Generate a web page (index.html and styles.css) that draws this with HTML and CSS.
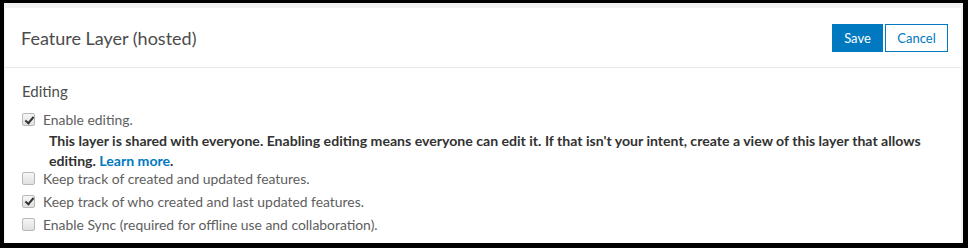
FILE: index.html
```html
<!DOCTYPE html>
<html>
<head>
<meta charset="utf-8">
<link rel="stylesheet" href="styles.css">
</head>
<body>
<div class="frame">
  <div class="panel">
    <div class="header">
      <h1 class="title">Feature Layer (hosted)</h1>
      <div class="actions">
        <button class="btn btn-primary">Save</button>
        <button class="btn btn-clear">Cancel</button>
      </div>
    </div>
    <div class="body">
      <div class="section-title">Editing</div>
      <label class="row"><span class="cb checked"></span><span>Enable editing.</span></label>
      <p class="warning">This layer is shared with everyone. Enabling editing means everyone can edit it. If that isn't your intent, create a view of this layer that allows editing. <a href="#">Learn more</a>.</p>
      <label class="row"><span class="cb"></span><span>Keep track of created and updated features.</span></label>
      <label class="row"><span class="cb checked"></span><span>Keep track of who created and last updated features.</span></label>
      <label class="row"><span class="cb"></span><span>Enable Sync (required for offline use and collaboration).</span></label>
    </div>
  </div>
</div>
</body>
</html>
```

FILE: styles.css
```css
html, body {
  margin: 0;
  padding: 0;
  background: #000;
}
.frame {
  width: 968px;
  height: 248px;
  box-sizing: border-box;
  border-style: solid;
  border-color: #000;
  border-width: 3px 5px 5px 4px;
  background: #f2f2f2;
  padding: 5px 2px 0 1px;
  overflow: hidden;
}
.panel {
  background: #fff;
  height: 100%;
  font-family: "Lato", "Noto Sans", sans-serif;
}
.header {
  display: flex;
  align-items: center;
  justify-content: space-between;
  height: 59px;
  padding: 0 13px 0 16px;
  border-bottom: 1px solid #e8e8e8;
}
.title {
  margin: 0;
  font-weight: 400;
  font-size: 18px;
  color: #4c4c4c;
}
.actions {
  display: flex;
  gap: 2px;
}
.btn {
  font-family: inherit;
  font-size: 13px;
  height: 28px;
  border: 1px solid #0079c1;
  cursor: pointer;
  padding: 0;
}
.btn-primary {
  background: #0079c1;
  color: #fff;
  width: 51px;
}
.btn-clear {
  background: #fff;
  color: #0079c1;
  width: 63px;
}
.body {
  padding: 13px 17px 0 17px;
}
.section-title {
  font-size: 15px;
  color: #4c4c4c;
  line-height: 20px;
  margin-bottom: 7px;
}
.row {
  display: flex;
  align-items: center;
  gap: 8px;
  font-size: 13.9px;
  color: #5e5e5e;
  height: 23px;
}
.cb {
  width: 11px;
  height: 11px;
  border: 1px solid #b8b8b8;
  border-radius: 2px;
  background: linear-gradient(#f6f6f6, #e0e0e0);
  position: relative;
  flex: none;
}
.cb.checked::after {
  content: "";
  position: absolute;
  left: 3.5px;
  top: 0.5px;
  width: 3px;
  height: 7px;
  border: solid #333;
  border-width: 0 2px 2px 0;
  transform: rotate(40deg);
}
.warning {
  max-width: 880px;
  margin: 0 0 -4.5px 27px;
  font-size: 14.1px;
  font-weight: 700;
  color: #323232;
  line-height: 20px;
}
.warning a {
  color: #0079c1;
  text-decoration: none;
}
```
